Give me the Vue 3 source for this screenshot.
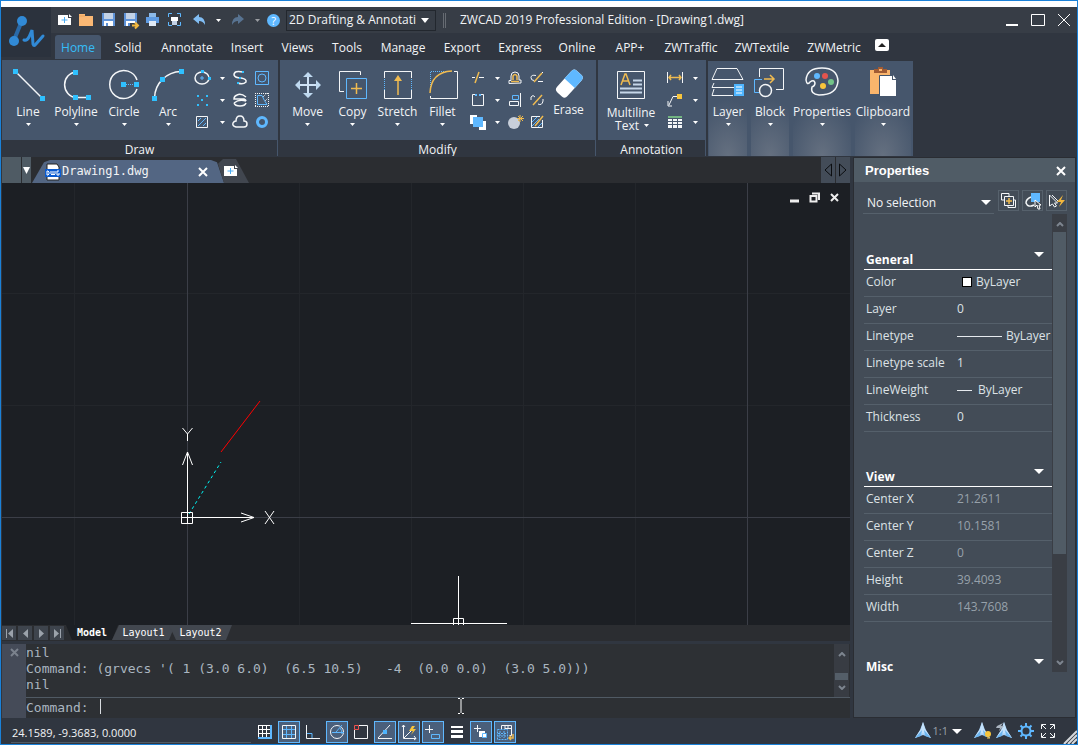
<script setup>
import { h, ref } from 'vue'

const W = 'fill="none" stroke="#f4f6f8" stroke-width="1"'
const W2 = 'fill="none" stroke="#f4f6f8" stroke-width="1.5"'
const B = 'fill="none" stroke="#5fb8ff" stroke-width="1"'
const O = 'fill="none" stroke="#f0bb50" stroke-width="1.5"'
const sq = (x, y, s = 5) => `<rect x="${x}" y="${y}" width="${s}" height="${s}" fill="#2fc0ff"/>`
const floppy = '<path d="M4 3h13v13H4z" fill="#5f93d8"/><path d="M6 3h9v6H6z" fill="#c3d2e6"/><path d="M6 11h9v5H6z" fill="#fff"/><path d="M8 13h2v3H8z" fill="#5f93d8"/>'
const compass = '<path d="M9 0l3 8 5 8-8-3-8 3 5-8z" fill="#a9d2f7"/><path d="M9 0l2 7 6 9-8-5-8 5 6-9z" fill="#c4e2fb"/><path d="M8 8L1 16l6-2zM10 8l7 8-6-2z" fill="#6cb5ef"/>'

const icons = {
  caret: [5, 3, '<path d="M0 0h5L2.5 3z" fill="#fff"/>'],
  down: [10, 5, '<path d="M0 0h10L5 5z" fill="#fff"/>'],
  logo: [50, 50, `<g fill="#318ad6"><path d="M20 16L13 33" stroke="#2a6aa8" stroke-width="4"/><circle cx="21" cy="14" r="5"/><circle cx="13" cy="34" r="5"/><path d="M23 33q3 1 5-3l3-7 1 14q1 3 3 0l7-8" fill="none" stroke-width="3" stroke-linecap="round" stroke="#318ad6"/></g>`],
  new: [20, 20, '<path d="M4 5h10v3h3v7H4z" fill="#fff"/><path d="M15 4l3 3h-3z" fill="#fff"/><path d="M10.500 7v6M7.500 10h6" stroke="#4cacf2"/>'],
  open: [20, 20, '<path d="M3 4h6v2h8v10H3z" fill="#fab874"/><path d="M3 6h6" stroke="#e9a45e"/>'],
  save: [20, 20, floppy],
  saveas: [20, 20, floppy + '<path d="M10 13h10v6H10z" fill="#373d46"/><path d="M12 15.500h5M15 12.500l3 3-3 3" fill="none" stroke="#f3b73c" stroke-width="2"/>'],
  print: [20, 20, '<path d="M7 3h7v4H7z" fill="#8cb9e8"/><path d="M4 7h13v6H4z" fill="#5f9be2"/><path d="M7 11h7v5H7z" fill="#dfe9f5"/>'],
  preview: [20, 20, `<path d="M4.500 7V3.500H8M13 3.500h3.500V7M16.500 12v3.500H13M8 15.500H4.500V12" ${B}/><path d="M7 7h7v4H7z" fill="#fff"/><path d="M8 11h5v4H8z" fill="#c3d2e6"/>`],
  undo: [20, 20, '<path d="M4 9l6-5v3q6 0 6 8-2-4-6-4v3z" fill="#81bdf3"/>'],
  redo: [20, 20, '<path d="M16 9l-6-5v3q-6 0-6 8 2-4 6-4v3z" fill="#587391"/>'],
  line: [36, 36, `<path d="M6 5l26 26" ${W2}/>${sq(3, 2)}${sq(30, 29)}`],
  polyline: [36, 36, `<path d="M18 5A12.500 12.800 0 0 0 18 30.500H30" ${W2}/>${sq(15, 3)}${sq(15, 28)}${sq(28, 28)}`],
  circle: [36, 36, `<path d="M31 13A14 14 0 1 0 31 22" ${W2}/><path d="M20 17.500h9" ${B} stroke-dasharray="1 1"/>${sq(15, 15)}${sq(28, 15)}`],
  arc: [36, 36, `<path d="M4.500 31A27 27 0 0 1 31 4.500" ${W2}/>${sq(29, 2)}${sq(10, 10)}${sq(2, 29)}`],
  move: [36, 36, '<path d="M18 8v20M8 18h20" stroke="#cfe2f5" stroke-width="2"/><path d="M18 5l5 5H13zM18 31l5-5H13zM5 18l5-5v10zM31 18l-5-5v10z" fill="#bfd9f0"/>'],
  copy: [36, 36, `<path d="M25.500 8V4.500h-21v20H9" ${W}/><path d="M11.500 11.500h20v20h-20z" fill="none" stroke="#5fb8ff"/><path d="M21.500 16v11M16 21.500h11" ${O}/>`],
  stretch: [36, 36, `<path d="M4.500 11V4.500h27V11M4.500 23v8.500h27V23" ${W}/><path d="M4.500 12v11M31.500 12v11" ${B} stroke-dasharray="1 1"/><path d="M18 10v18" ${O} stroke-width="2"/><path d="M18 8l4 6h-8z" fill="#f0bb50"/>`],
  fillet: [36, 36, `<path d="M29 4.500h3.500v27h-27V29" ${W}/><path d="M5.500 24V4.500H26" ${B} stroke-dasharray="1 1"/><path d="M5 26Q6 5 27 4" ${O} stroke-width="2"/>`],
  erase: [36, 34, '<g transform="rotate(-48 18 17)"><rect x="4" y="10" width="29" height="14" rx="4" fill="#fff"/><path d="M19 10h10q4 0 4 4v6q0 4-4 4H19z" fill="#5fb8ff"/></g>'],
  mtext: [36, 36, `<path d="M4.500 4.500h27v27h-27z" ${W}/><path d="M8 18l4-11h1l4 11M10 14h5" ${O} stroke-width="2"/><path d="M20 13.500h9M20 17.500h9M7 21.500h22M7 25.500h22" fill="none" stroke="#c5d6e8" stroke-width="2"/>`],
  layer: [36, 36, `<path d="M7 1.500h20l6 11H2zM4 16l-2 4.500h24M4 22l-2 6.500h21" ${W}/><path d="M24 17h10v12H24z" fill="#4fb5ff"/><path d="M26 20h6M26 23h6M26 26h6" stroke="#fff"/>`],
  block: [36, 36, `<path d="M7.500 10V1.500h24v21H24" ${W}/><path d="M10 12.500H2.500v13H7" ${B}/><circle cx="13.500" cy="23.500" r="6" ${W2}/><path d="M12 12h9M18 8l4 4-4 4" ${O} stroke-width="2"/>`],
  palette: [36, 36, `<path d="M6 15q4-3 5 1 0 3-3 4-2 7 7 8 18 0 19-14Q33 1 18 1 3 1 2 13q1 6 4 2z" ${W2}/><circle cx="13" cy="9" r="3" fill="#5fb8ff"/><circle cx="21" cy="9" r="3" fill="#e4544e"/><circle cx="27" cy="15" r="3" fill="#72c488"/><circle cx="19" cy="19" r="3" fill="#f8c53c"/>`],
  clipboard: [36, 36, '<path d="M5 3h20v24H5z" fill="#fab56c"/><path d="M9 6V2h4V0h5v2h4v4z" fill="#a15b33"/><path d="M14 2h3v2h-3z" fill="#fab56c"/><path d="M15 9h12v4h4v16H15z" fill="#fff"/><path d="M28 8l3 4h-3z" fill="#fff"/><path d="M14.500 29V8.500H27" fill="none" stroke="#42536a"/>'],
  ellipse: [18, 18, `<ellipse cx="9" cy="9" rx="7" ry="6" ${W2}/><path d="M9 7v4M7 9h4" ${B}/>${sq(8, 1, 3)}${sq(15, 8, 3)}`],
  points: [18, 18, [[4, 4], [13, 4], [8, 8], [4, 13], [13, 13]].map(p => sq(p[0], p[1], 2)).join('')],
  hatch: [18, 18, `<path d="M3.500 3.500h11v11h-11z" ${W}/><path d="M5 8l3-3M5 13l8-8M10 13l3-3" ${B}/>`],
  spline: [18, 18, `<path d="M12 3Q3 1 3 6q1 3 7 3 6 1 5 4-3 3-8 1" ${W2}/>${sq(11, 2, 2)}${sq(8, 8, 2)}${sq(6, 13, 2)}`],
  helix: [18, 18, `<path d="M15 6q-5-4-9-2-3 1-3 4h10q2 1 2 2M3 12q5-4 12-2M3 12q1 3 6 3t6-3" ${W2}/>`],
  cloud: [18, 18, `<path d="M5 14Q1 13 2 10q1-2 3-2 0-5 4-5t4 5q3 0 3 3t-3 3z" ${W2}/>`],
  region: [18, 18, `<path d="M2.500 2.500h13v13h-13z" ${B}/><circle cx="9" cy="9" r="4" ${B}/>`],
  wipeout: [18, 18, `<path d="M4.500 13.500v-9H9q2 5 5 9z" ${B}/><path d="M2.500 2v14M15.500 2v14M2 2.500h14M2 15.500h14" ${W} stroke-dasharray="1 1"/><path d="M10 6l4-4M12 10l4-4" ${W} stroke-dasharray="1 1"/>`],
  donut: [18, 18, '<circle cx="9" cy="9" r="4.500" fill="none" stroke="#5fb8ff" stroke-width="3"/>'],
  trim: [18, 18, `<path d="M3 8.500h3M10 8.500h5" ${W}/><path d="M6 14l4-11" ${O}/>`],
  stretch2: [18, 18, `<path d="M6 3.500H3.500v11h11v-11H12" ${W}/><path d="M6 4h2M10 4h2" stroke="#5fb8ff" stroke-width="2"/>`],
  order: [18, 18, '<path d="M1 2h7v3H4v6H1zM10 13h4V8h3v9h-7z" fill="#fff"/><path d="M4 4h10v10H4z" fill="#5fb8ff"/>'],
  offset: [18, 18, `<path d="M3 14.500v-3h2V7q0-4 4-4t4 4v4h2v3z" ${W}/><path d="M5 12.500h8M7 11V7q2-3 4 0v4" ${O}/>`],
  align: [18, 18, `<path d="M14.500 2v14" ${W}/><path d="M6.500 4.500h6v4h-6z" ${B}/><path d="M3.500 10.500h9v4h-9z" ${W}/>`],
  explode: [18, 18, '<circle cx="8" cy="10" r="6" fill="#c8cfda"/><path d="M14 2v7M11 5.500h7M12 3l5 5M17 3l-5 5" stroke="#f0bb50"/>'],
  edit1: [18, 18, `<path d="M8 6.500q-5-1-5 2t3 3M10 12.500h5" ${W}/><path d="M6 13l8-9" ${O}/><path d="M14 4l1-1" stroke="#fff"/>`],
  edit2: [18, 18, `<path d="M3 9V6q2-3 4 0M10 13q4 2 5-3V8" ${W}/><path d="M5 14l9-10" ${O}/>`],
  edit3: [18, 18, `<path d="M12 3.500H3.500v11h11V7" ${W}/><path d="M4 9l5-5M4 13l7-7M10 14l4-4" ${B}/><path d="M7 13l8-10" ${O}/>`],
  dim: [18, 18, `<path d="M1.500 3v11M16.500 3v11" ${W}/><path d="M3 8.500h12M5 6L3 8.500 5 11M13 6l2 2.500-2 2.500" ${O}/>`],
  leader: [18, 18, `<path d="M3 14l4-8.500h5M2 10v5h4" ${W}/><path d="M11 3h5v5h-5z" fill="#f8c53c"/>`],
  table: [18, 18, '<path d="M2 3h14v2H2z" fill="#72b482"/><path d="M2 6h14v9H2z" fill="#f4f6f8"/><path d="M2 8.500h14M2 11.500h14M6.500 6v9M11.500 6v9" stroke="#46566c"/>'],
  dwg: [18, 18, '<path d="M3 1h10l2 3v13H3z" fill="#fff" stroke="#222"/><path d="M1 6h16v8H1z" fill="#0a5bd0"/><path d="M3 8v4h1l1-1V9L4 8zM7 8v3l1 1 1-1V8M9 11l1 1 1-1V8M15 8h-2v4h2v-2" fill="none" stroke="#fff"/>'],
  prev: [14, 16, '<path d="M10.500 2v12L4 8z" fill="none" stroke="#0b0d10"/>'],
  next: [14, 16, '<path d="M3.500 2v12L10 8z" fill="none" stroke="#0b0d10"/>'],
  sel1: [20, 20, `<path d="M5 9H2.500V2.500H10V5M15 9h1.500v7.500H9V15" ${W}/><path d="M5.500 5.500h9v9h-9z" ${W}/><path d="M10 7v6M7 10h6" ${O}/>`],
  sel2: [20, 20, `<path d="M8 6q-5 2-5 6 2 5 8 2" ${W2}/><path d="M8 2h9v9H8z" fill="#5fb8ff"/><path d="M12 9v7l2-2 1 4h2l-1-4h2z" fill="#444c57" stroke="#fff"/>`],
  sel3: [20, 20, `<path d="M2.500 4v11l3-2 2 3 2-1-2-3h3zM5 4l6 6" ${W}/><path d="M16 4l-6 7h4l-2 5 6-7h-4z" fill="#f3b73c"/>`],
  gridSnap: [20, 20, '<path d="M3 3h13v13H3z" fill="#fff"/><path d="M4 4h3v3H4zM8 4h3v3H8zM12 4h3v3h-3zM4 8h3v3H4zM8 8h3v3H8zM12 8h3v3h-3zM4 12h3v3H4zM8 12h3v3H8zM12 12h3v3h-3z" fill="#303640"/><path d="M3 16h13V3" fill="none" stroke="#5fb8ff" stroke-width="2"/>'],
  grid: [20, 20, `<path d="M7.500 3v13M12.500 3v13M3 7.500h13M3 12.500h13" ${B}/><path d="M3.500 3.500h13v13h-13z" ${W}/>`],
  ortho: [20, 20, `<path d="M3.500 3v13.500H17" ${W}/><path d="M4 11.500h5V16" ${B}/>`],
  polar: [20, 20, `<circle cx="10" cy="10" r="6.500" ${W}/><path d="M5 10.500h12M9 10l6-7M13 6q2 2 2 6" ${B}/>`],
  osnap: [20, 20, `<path d="M8 3.500h8.500v13h-13V8" ${W}/><path d="M3.500 3.500h4v4h-4z" fill="none" stroke="#f0524e"/>`],
  otrack: [20, 20, `<path d="M3 16.500h14M3 16L15 3" ${W}/><path d="M8 8h4v4H8z" fill="#4fb5ff"/>`],
  ducs: [20, 20, `<path d="M4.500 3v13.500H17M3 5l1.500-2L6 5M15 14l2 2.500-2 1.500M5 16l7-7" ${W}/><path d="M13 4l-3 5h4l-2 4 5-6h-3l2-3z" fill="#f8c53c"/>`],
  dyn: [20, 20, `<path d="M6.500 3v8M2 7.500h8" ${W}/><path d="M8.500 12.500h8v4h-8z" ${B}/>`],
  lwt: [20, 20, '<path d="M4 4h12v2H4zM4 8h12v3H4zM4 13h12v3H4z" fill="#fff"/>'],
  cycle: [20, 20, `<path d="M6.500 3v7M3 6.500h7" ${W}/><path d="M8 9h6v6H8z" fill="#fff"/><path d="M11.500 11.500h4v4h-4z" fill="#fff" stroke="#5fb8ff"/>`],
  model: [20, 20, `<path d="M6.500 7V3.500h10v10h-2M10 3.500V7M13 3.500V7M10 6.500h6" ${W}/><path d="M2.500 7.500h10v10h-10zM5 9v7M9 9v7M3 11.500h9M3 14h9" ${B} stroke-dasharray="2 1"/><path d="M18 12v4h-4M16 14l-2 2 2 2" ${O}/>`],
  annoA: [18, 18, compass],
  annoB: [18, 18, compass + '<circle cx="15" cy="12" r="3" fill="#f8c53c"/><path d="M14 16h3" stroke="#f8c53c"/>'],
  annoC: [18, 18, compass + '<path d="M2 4l6-3-2 3h3L4 9l1-3H1z" fill="#aab4c0"/>'],
  gear: [18, 18, '<circle cx="9" cy="9" r="4.500" fill="none" stroke="#5fb8ff" stroke-width="2"/><path d="M9 1v3M9 14v3M1 9h3M14 9h3M3.500 3.500l2 2M12.500 12.500l2 2M14.500 3.500l-2 2M5.500 12.500l-2 2" stroke="#5fb8ff" stroke-width="2"/>'],
  full: [18, 18, `<path d="M2.500 7V2.500H7M3 3l4 4M11 2.500h4.500V7M15 3l-4 4M15.500 11v4.500H11M15 15l-4-4M7 15.500H2.500V11M3 15l4-4" ${W}/>`],
}

const Icon = ({ n }) => {
  const [w, hgt, body] = icons[n]
  return h('svg', { width: w, height: hgt, viewBox: `0 0 ${w} ${hgt}`, 'aria-hidden': 'true', innerHTML: body })
}
Icon.props = ['n']

const quick = [['new'], ['open'], ['save'], ['saveas'], ['print'], ['preview'], ['undo'], ['caret'], ['redo'], ['caret', true], ['help']]
const menus = ['Home', 'Solid', 'Annotate', 'Insert', 'Views', 'Tools', 'Manage', 'Export', 'Express', 'Online', 'APP+', 'ZWTraffic', 'ZWTextile', 'ZWMetric']
const groups = [
  { name: 'Draw', big: [['line', 'Line'], ['polyline', 'Polyline'], ['circle', 'Circle'], ['arc', 'Arc']],
    small: ['ellipse', 'caret', 'spline', 'region', 'points', 'caret', 'helix', 'wipeout', 'hatch', 'caret', 'cloud', 'donut'] },
  { name: 'Modify', big: [['move', 'Move'], ['copy', 'Copy'], ['stretch', 'Stretch'], ['fillet', 'Fillet']],
    small: ['trim', 'caret', 'offset', 'edit1', 'stretch2', 'caret', 'align', 'edit2', 'order', 'caret', 'explode', 'edit3'], erase: true },
  { name: 'Annotation', mtext: true, big: [], small: ['dim', 'caret', 'leader', 'caret', 'table', 'caret'] },
]
const folded = [['layer', 'Layer'], ['block', 'Block'], ['palette', 'Properties'], ['clipboard', 'Clipboard']]
const sections = [
  { name: 'General', rows: [['Color', 'ByLayer', 'swatch'], ['Layer', '0'], ['Linetype', 'ByLayer', 'dash long'], ['Linetype scale', '1'], ['LineWeight', 'ByLayer', 'dash'], ['Thickness', '0']] },
  { name: 'View', dim: true, rows: [['Center X', '21.2611'], ['Center Y', '10.1581'], ['Center Z', '0'], ['Height', '39.4093'], ['Width', '143.7608']] },
  { name: 'Misc', rows: [] },
]
const modes = [['gridSnap', 0], ['grid', 1], ['ortho', 0], ['polar', 1], ['osnap', 0], ['otrack', 1], ['ducs', 1], ['dyn', 1], ['lwt', 0], ['cycle', 1], ['model', 1]]
const command = ref('')
</script>

<template>
  <div class="app">
    <header class="top">
      <button class="logo" aria-label="Application menu"><Icon n="logo" /></button>
      <div class="bars">
        <div class="titlebar">
          <div class="quick">
            <button v-for="([n, off], i) in quick" :key="i" :aria-label="n" :class="{ off }">
              <span v-if="n === 'help'" class="help">?</span><Icon v-else :n="n" />
            </button>
            <div class="workspace">
              <select aria-label="Workspace"><option>2D Drafting &amp; Annotati</option></select>
              <svg width="8" height="5"><path d="M0 0h8L4 5z" fill="#fff" /></svg>
            </div>
          </div>
          <i class="grip"></i>
          <h1>ZWCAD 2019 Professional Edition - [Drawing1.dwg]</h1>
          <div class="win">
            <button aria-label="Minimize"><svg width="14" height="14"><path d="M1 12h12" stroke="#fff" stroke-width="2" /></svg></button>
            <button aria-label="Maximize"><svg width="14" height="14"><path d="M.5 1.500h13v11H.5z" fill="none" stroke="#fff" /></svg></button>
            <button aria-label="Close"><svg width="14" height="14"><path d="M1 1l12 12M13 1L1 13" stroke="#fff" /></svg></button>
          </div>
        </div>
        <nav class="menus">
          <button v-for="(m, i) in menus" :key="m" :class="{ on: i === 0 }">{{ m }}</button>
          <button class="fold" aria-label="Collapse ribbon"><svg width="8" height="4"><path d="M0 4h8L4 0z" fill="#222" /></svg></button>
        </nav>
      </div>
    </header>

    <section class="ribbon">
      <div v-for="g in groups" :key="g.name" class="group" :class="g.name.toLowerCase()">
        <div class="tools">
          <button v-if="g.mtext" class="big wide"><Icon n="mtext" /><span>Multiline</span><span>Text <Icon n="caret" /></span></button>
          <button v-for="[n, label] in g.big" :key="n" class="big" :class="n"><Icon :n="n" /><span>{{ label }}</span><Icon n="caret" /></button>
          <div class="small"><button v-for="(n, i) in g.small" :key="i" :aria-label="n"><Icon :n="n" /></button></div>
          <button v-if="g.erase" class="big"><Icon n="erase" /><span>Erase</span></button>
        </div>
        <h2>{{ g.name }}</h2>
      </div>
      <div class="folded">
        <button v-for="[n, label] in folded" :key="n" class="big" :class="n"><Icon :n="n" /><span>{{ label }}</span><Icon n="caret" /></button>
      </div>
    </section>

    <main class="work">
      <div class="left">
        <div class="docs">
          <i class="stub"></i>
          <button class="list" aria-label="Document list"><svg width="7" height="7"><path d="M0 0h7L3.500 7z" fill="#fff" /></svg></button>
          <div class="doc">
            <Icon n="dwg" /><span>Drawing1.dwg</span>
            <button aria-label="Close drawing"><svg width="10" height="10"><path d="M1 1l8 8M9 1L1 9" stroke="#fff" stroke-width="2" /></svg></button>
          </div>
          <button class="add" aria-label="New drawing"><Icon n="new" /></button>
          <button class="shift" aria-label="Previous"><Icon n="prev" /></button>
          <button class="shift" aria-label="Next"><Icon n="next" /></button>
        </div>

        <div class="canvas">
          <svg class="drawing" width="100%" height="100%">
            <g stroke="#23262b">
              <path d="M72.500 0V2000M297.500 0V2000M409.500 0V2000M521.500 0V2000M633.500 0V2000M0 110.500H4000M0 222.500H4000" />
            </g>
            <path d="M185.500 0V2000M745.500 0V2000M0 334.500H4000" stroke="#3b3e47" />
            <path d="M219 269L258 218" stroke="#f00" />
            <path d="M187 331L219 279" stroke="#00f5f5" stroke-dasharray="3 3" />
            <g fill="none" stroke="#fff">
              <path d="M179.500 329.500h11v11h-11zM185.500 340V269M180.500 282l5-13 5 13M180 334.500h72M239 330l13 4.500-13 4.500" />
              <path d="M180.500 245l5 6 5-6M185.500 251v7M263 328l9 13M272 328l-9 13" />
              <path d="M456.500 393v49M409 440.500h96M451.500 435.500h10v10h-10z" />
            </g>
          </svg>
          <div class="mdi">
            <button aria-label="Minimize drawing"><svg width="11" height="11"><path d="M1 9h9" stroke="#eee" stroke-width="3" /></svg></button>
            <button aria-label="Restore drawing"><svg width="11" height="11"><path d="M3 1.500h7V8M1.500 4h6v5.500h-6z" fill="none" stroke="#eee" stroke-width="2" /></svg></button>
            <button aria-label="Close drawing window"><svg width="11" height="11"><path d="M2 2l7 7M9 2L2 9" stroke="#eee" stroke-width="2" /></svg></button>
          </div>
        </div>

        <div class="layouts">
          <button class="nav" aria-label="First"><svg width="9" height="9"><path d="M1.500 0v9" stroke="#9ba2ab" /><path d="M8 0v9L3 4.500z" fill="#9ba2ab" /></svg></button>
          <button class="nav" aria-label="Back"><svg width="9" height="9"><path d="M7 0v9L2 4.500z" fill="#9ba2ab" /></svg></button>
          <button class="nav" aria-label="Forward"><svg width="9" height="9"><path d="M2 0v9l5-4.500z" fill="#9ba2ab" /></svg></button>
          <button class="nav" aria-label="Last"><svg width="9" height="9"><path d="M7.500 0v9" stroke="#9ba2ab" /><path d="M1 0v9l5-4.500z" fill="#9ba2ab" /></svg></button>
          <button class="sheet on">Model</button>
          <button class="sheet">Layout1</button>
          <button class="sheet last">Layout2</button>
        </div>

        <div class="console">
          <div class="side"><button aria-label="Close command line"><svg width="9" height="9"><path d="M1 1l7 7M8 1L1 8" stroke="#7b828d" stroke-width="2" /></svg></button></div>
          <div class="log">
            <pre>nil
Command: (grvecs '( 1 (3.0 6.0)  (6.5 10.5)   -4  (0.0 0.0)  (3.0 5.0)))
nil</pre>
            <div class="bar">
              <svg width="8" height="5"><path d="M1 4l3-3 3 3" fill="none" stroke="#7d858f" stroke-width="2" /></svg>
              <i></i>
              <svg width="8" height="5"><path d="M1 1l3 3 3-3" fill="none" stroke="#7d858f" stroke-width="2" /></svg>
            </div>
          </div>
          <div class="prompt">
            <label for="cmd">Command:</label><i class="beam"></i><input id="cmd" v-model="command" type="text" />
            <svg class="pointer" width="8" height="16"><path d="M1 .5h2M5 .5h2M1 15.500h2M5 15.500h2M4 1v14" stroke="#fff" /></svg>
          </div>
        </div>
      </div>

      <aside class="panel">
        <header><h2>Properties</h2><button aria-label="Close properties"><svg width="10" height="10"><path d="M1 1l8 8M9 1L1 9" stroke="#fff" stroke-width="2" /></svg></button></header>
        <div class="pick">
          <div class="choice"><select aria-label="Selection"><option>No selection</option></select><Icon n="down" /></div>
          <button v-for="n in ['sel1', 'sel2', 'sel3']" :key="n" :aria-label="n"><Icon :n="n" /></button>
        </div>
        <div class="scroll">
          <div class="sections">
            <section v-for="s in sections" :key="s.name" :class="{ dim: s.dim, bare: !s.rows.length }">
              <h3>{{ s.name }}<Icon n="down" /></h3>
              <dl>
                <div v-for="[k, v, mark] in s.rows" :key="k"><dt>{{ k }}</dt><dd><i v-if="mark" :class="mark"></i>{{ v }}</dd></div>
              </dl>
            </section>
          </div>
          <div class="track">
            <svg width="8" height="5"><path d="M1 4l3-3 3 3" fill="none" stroke="#7d858f" stroke-width="2" /></svg>
            <i></i>
            <svg width="8" height="5"><path d="M1 1l3 3 3-3" fill="none" stroke="#7d858f" stroke-width="2" /></svg>
          </div>
        </div>
      </aside>
    </main>

    <footer class="status">
      <output>24.1589, -9.3683, 0.0000</output>
      <div class="modes"><button v-for="[n, on] in modes" :key="n" :aria-label="n" :class="{ on }"><Icon :n="n" /></button></div>
      <div class="right">
        <button aria-label="Annotation scale"><Icon n="annoA" /></button>
        <button class="scale">1:1 <Icon n="down" /></button>
        <button v-for="n in ['annoB', 'annoC', 'gear', 'full']" :key="n" :aria-label="n"><Icon :n="n" /></button>
      </div>
      <svg class="size" width="14" height="14"><path d="M1 14L14 1M5 14l9-9M9 14l5-5" stroke="#d5d8dc" stroke-width="2" /></svg>
    </footer>
  </div>
</template>

<style>
body { background: #303640; }
</style>

<style scoped>
* { box-sizing: border-box; }
.app {
  display: flex; flex-direction: column; min-height: 100vh;
  border: 1px solid #1a81d8; background: #303640; color: #f2f4f6;
  font: 12px/16px "Open Sans", "Noto Sans", sans-serif;
}
button { display: flex; align-items: center; justify-content: center; padding: 0; border: 0; background: none; color: inherit; font: inherit; white-space: nowrap; }
svg { display: block; flex: none; }
h1, h2, h3, dl, dd, pre { margin: 0; font: inherit; }
select { appearance: none; border: 0; background: none; color: inherit; font: inherit; outline: 0; }

.top { display: flex; border-top: 6px solid #fff; }
.logo { width: 50px; height: 50px; background: #2b323d; flex: none; }
.bars { flex: 1; }
.titlebar { display: flex; align-items: center; height: 26px; padding-left: 2px; background: #373d46; }
.quick { display: grid; grid-template-columns: repeat(6, 22px) 28px 10px 30px 8px 25px 150px; align-items: center; }
.off { opacity: 0.5; }
.help { width: 13px; height: 13px; border-radius: 50%; background: #5fb8ff; color: #fff; font-size: 11px; line-height: 13px; }
.workspace { display: flex; align-items: center; height: 21px; padding-right: 6px; border: 1px solid #22272e; }
.workspace select { flex: 1; min-width: 0; padding: 0 0 0 2px; }
.grip { width: 3px; height: 15px; margin: 0 14px 0 7px; border: solid #666b72; border-width: 0 1px; }
.titlebar h1 { flex: 1; white-space: nowrap; }
.win { display: flex; gap: 12px; padding-right: 6px; }
.menus { display: grid; grid-template-columns: 46px 54px 64px 56px 45px 54px 58px 60px 56px 58px 48px 74px 68px 76px 20px; align-items: center; height: 27px; padding: 1px 0 0 4px; }
.menus button { height: 24px; padding-top: 2px; }
.menus .on { background: #46566c; color: #35bdf8; border-radius: 3px 3px 0 0; }
.menus .fold { width: 14px; height: 12px; margin: 0 0 5px 3px; padding: 0; background: #fff; border-radius: 2px; }

.ribbon { display: flex; height: 96px; padding-left: 1px; }
.group { display: flex; flex-direction: column; margin-right: 2px; }
.tools { display: flex; align-items: flex-start; flex: 1; padding: 7px 5px 0; background: #46566c; }
.group h2 { height: 16px; padding-top: 2px; text-align: center; border-right: 1px solid #46566c; }
.big { flex-direction: column; width: 45px; }
.big > span { display: flex; align-items: center; gap: 5px; margin-top: 1px; }
.big > svg:last-child { margin-top: 3px; }
.draw .tools { padding: 7px 6px 0 2px; }
.draw .big { width: 48px; }
.draw .big.arc { width: 40px; }
.draw .small { grid-template-columns: 28px 12px 24px 20px; }
.small { display: grid; grid-template-columns: 26px 12px 24px 19px; grid-auto-rows: 22px; }
.annotation .tools { padding: 7px 5px 0 3px; }
.annotation .small { grid-template-columns: 28px 12px; }
.big.wide { width: 60px; line-height: 13px; }
.big.wide > span { margin-top: 3px; }
.big.wide > span + span { margin-top: 0; padding-left: 2px; }
.folded { display: flex; gap: 4px; margin-top: 1px; padding: 0 2px 0 1px; background: #46566c; }
.folded .big { width: 38px; padding-top: 6px; justify-content: flex-start; background: radial-gradient(36px 56px at 50% 100%, #657080, #46566c); }
.folded .big.palette { width: 58px; }
.folded .big.clipboard { width: 56px; }

.work { display: flex; flex: 1; gap: 4px; padding: 1px 2px 0 1px; background: #303640; }
.left { display: flex; flex-direction: column; flex: 1; min-width: 0; }
.docs { display: flex; height: 26px; background: #2b2d31; }
.stub { width: 19px; margin-right: 1px; background: #4f5b64; }
.list { width: 9px; background: #4f5b64; }
.doc { display: flex; align-items: center; width: 192px; margin: 3px 0 0 1px; padding: 0 16px 0 12px; background: #536683; clip-path: polygon(0 100%, 12px 10%, 18px 0, 179px 0, 185px 10%, 100% 100%); }
.doc span { flex: 1; padding-bottom: 2px; font: 12px/16px "DejaVu Sans Mono", monospace; }
.add { width: 31px; margin: 2px auto 0 -6px; padding-right: 8px; background: #41464f; clip-path: polygon(0 20%, 5px 0, 18px 0, 100% 100%, 6px 100%); }
.shift { width: 14px; margin-left: 1px; background: #434c58; }
.canvas { position: relative; flex: 1; min-height: 442px; background: #1c1f24; overflow: hidden; }
.drawing { position: absolute; inset: 0; }
.mdi { position: absolute; top: 9px; right: 10px; display: flex; gap: 9px; }
.layouts { display: flex; height: 16px; background: #2b2d31; }
.nav { width: 14px; height: 14px; margin: 1px 2px 0 0; background: #3e444d; }
.sheet { width: 63px; height: 15px; margin-right: -6px; background: #42474f; font: 10px/14px "DejaVu Sans Mono", monospace; clip-path: polygon(7px 0, 100% 0, 57px 100%, 0 100%); color: #fff; }
.sheet.last { clip-path: polygon(0 0, 100% 0, 57px 100%, 7px 100%); }
.sheet.on { width: 52px; background: #1c1f24; font-weight: bold; clip-path: polygon(0 0, 100% 0, 46px 100%, 6px 100%); }
.console { display: grid; grid-template-columns: 24px 1fr; margin-top: 3px; background: #2d3034; color: #aab6c0; font: 13px/16px "DejaVu Sans Mono", monospace; }
.side { grid-row: span 2; display: flex; align-items: flex-start; justify-content: center; padding-top: 4px; background: #454b58; }
.log { display: flex; justify-content: space-between; height: 54px; border-bottom: 1px solid #505a64; }
.log pre { padding-top: 1px; }
.bar { display: flex; flex-direction: column; align-items: center; width: 15px; margin-right: 1px; padding: 8px 1px 6px; background: #383c43; }
.bar i { width: 13px; height: 7px; margin: 16px 0 5px; background: #545e68; }
.prompt { position: relative; display: flex; align-items: center; height: 20px; }
.prompt input { flex: 1; min-width: 0; padding: 0; border: 0; outline: 0; background: none; color: inherit; font: inherit; }
.beam { width: 1px; height: 15px; margin: 0 0 4px 11px; background: #d8dce0; }
.pointer { position: absolute; left: 431px; top: 0; }

.panel { display: flex; flex-direction: column; width: 221px; margin: 1px 0; background: #434c57; outline: 1px solid #2a2d33; }
.panel header { display: flex; align-items: center; justify-content: space-between; height: 24px; padding: 2px 9px 0 11px; background: #505c66; }
.panel h2 { font: bold 13px/16px "Liberation Sans", Arial, sans-serif; color: #fff; }
.pick { display: flex; gap: 3px; height: 32px; padding: 8px 8px 0 9px; }
.pick button { width: 21px; height: 21px; border: 1px solid #56616c; }
.choice { display: flex; align-items: center; flex: 1; height: 24px; margin-right: 1px; padding: 2px 3px 0 0; border-bottom: 1px solid #56616c; }
.choice select { flex: 1; min-width: 0; padding-left: 4px; }
.scroll { display: flex; flex: 1; padding: 0 8px 0 10px; }
.sections { flex: 1; color: #dde2e6; }
h3 { display: flex; align-items: flex-end; justify-content: space-between; height: 56px; padding: 0 8px 1px 2px; border-bottom: 1px solid #fff; color: #fff; font-weight: bold; }
section + section h3 { height: 55px; }
h3 svg { margin-bottom: 11px; }
.bare h3 { border-color: transparent; }
dl > div { display: grid; grid-template-columns: 91px 1fr; align-items: center; height: 27px; padding: 0 0 2px 2px; border-bottom: 1px solid #55606b; white-space: nowrap; }
dd { display: flex; align-items: center; }
.dim dd { color: #97a1aa; }
.swatch { width: 10px; height: 10px; margin: 0 4px 0 5px; border: 1px solid #000; background: #fff; }
.dash { width: 15px; height: 1px; margin-right: 6px; background: #e6eaee; }
.dash.long { width: 45px; margin-right: 4px; }
.track { display: flex; flex-direction: column; align-items: center; width: 15px; height: 458px; padding: 8px 1px 7px; background: #3a3e45; }
.track i { width: 13px; height: 322px; margin: 5px 0 auto; background: #505b65; }

.status { position: relative; display: flex; align-items: center; height: 26px; padding: 0 20px 0 10px; }
.status output { width: 240px; height: 20px; margin-top: 3px; padding: 2px 0 0 1px; border-bottom: 1px solid #505a64; font-size: 11px; }
.modes { display: flex; gap: 4px; margin: 2px auto 0 4px; }
.modes button { width: 20px; height: 20px; }
.modes .on { background: #4a5f7b; outline: 1px solid #5fb8ff; }
.modes svg { flex: none; }
.right { display: flex; align-items: center; gap: 4px; }
.right .scale { gap: 4px; margin: 0 7px 0 -3px; color: #98a0a8; font-size: 11px; }
.size { position: absolute; right: 0; bottom: 0; }
</style>
